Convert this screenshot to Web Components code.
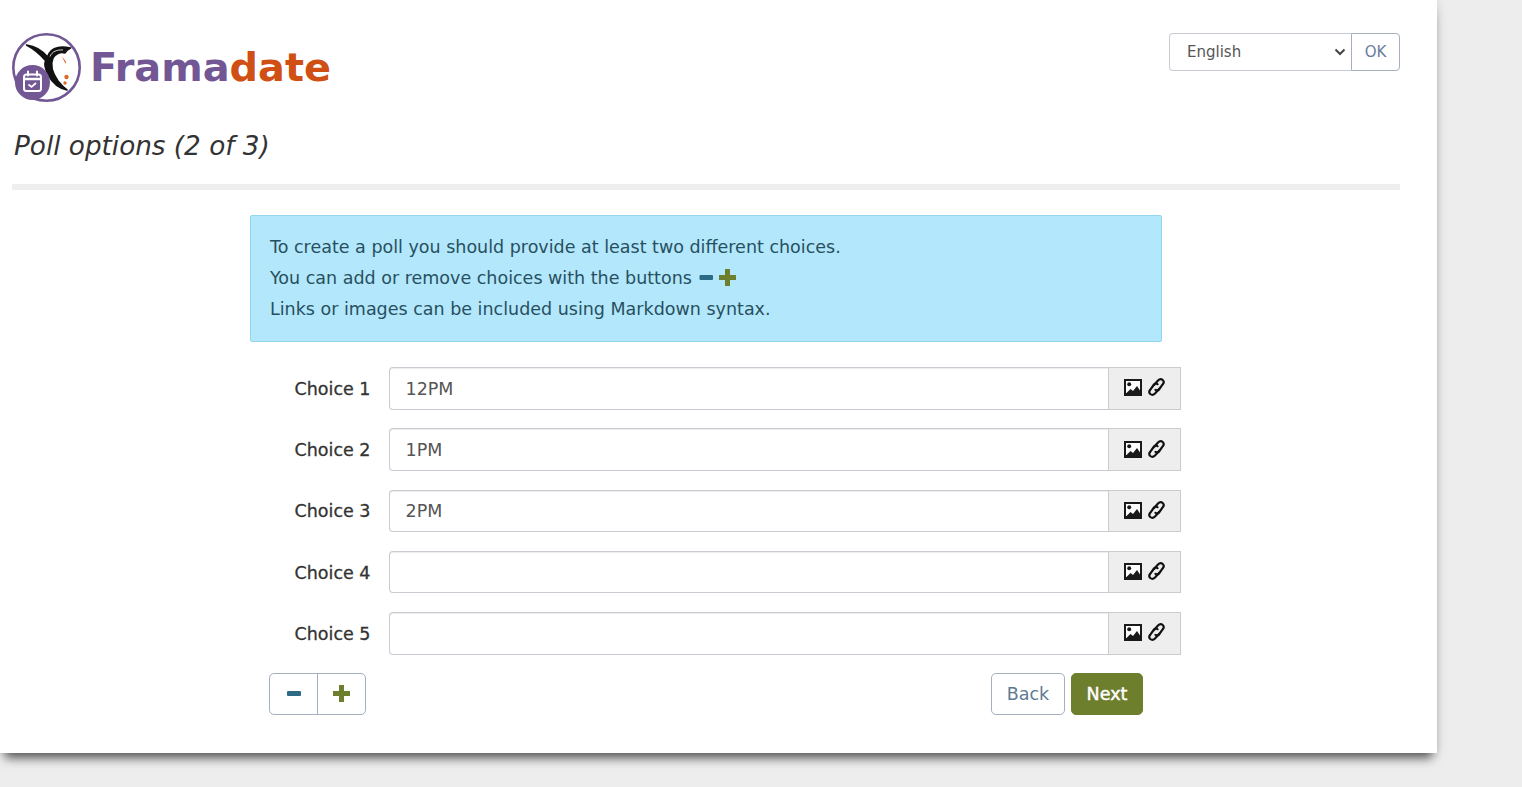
<!DOCTYPE html>
<html><head><meta charset="utf-8"><style>
html,body{margin:0;padding:0;height:787px;overflow:hidden;background:#ededed;font-family:"DejaVu Sans",sans-serif;color:#333}
</style></head><body>
<fd-page>
  <fd-header slot="header"></fd-header>
  <fd-alert>
    <div>To create a poll you should provide at least two different choices.</div>
    <div>You can add or remove choices with the buttons <fd-sign kind="minus"></fd-sign><fd-sign kind="plus"></fd-sign></div>
    <div>Links or images can be included using Markdown syntax.</div>
  </fd-alert>
  <fd-choice label="Choice 1" value="12PM"></fd-choice>
  <fd-choice label="Choice 2" value="1PM"></fd-choice>
  <fd-choice label="Choice 3" value="2PM"></fd-choice>
  <fd-choice label="Choice 4"></fd-choice>
  <fd-choice label="Choice 5"></fd-choice>
  <fd-actions></fd-actions>
</fd-page>
<script>
function def(name, html, init){
  customElements.define(name, class extends HTMLElement{
    constructor(){super();this.attachShadow({mode:'open'}).innerHTML=html;}
    connectedCallback(){ if(init) init.call(this,this.shadowRoot); }
  });
}
def('fd-page',`<style>
:host{display:block;width:1437px;height:753px;box-sizing:border-box;background:#fff;box-shadow:0 10px 10px -5px rgba(0,0,0,.62),0 0 10px rgba(0,0,0,.12);padding:0 37px 0 12px}
.body{display:block}
</style><slot name="header"></slot><div class="body"><slot></slot></div>`);

def('fd-header',`<style>
:host{display:block;height:190px;position:relative}
.top{display:flex;justify-content:space-between;align-items:flex-start;padding-top:33px;height:70px;box-sizing:content-box}
.brand{display:flex;align-items:center;gap:8px;height:70px}
.word{font:bold 39.85px/1 "DejaVu Sans",sans-serif;color:#725794;display:block;white-space:nowrap}
.word b{color:#cf4f14;font-weight:bold}
svg{display:block;flex:none}
.lang{display:flex;height:38px;font-size:15px;line-height:37px;color:#555}
.sel{width:182px;box-sizing:border-box;border:1px solid #c8ccd2;border-right:0;border-radius:4px 0 0 4px;padding-left:17px;display:flex;justify-content:space-between;align-items:center;padding-right:5px}
.ok{width:49px;box-sizing:border-box;border:1px solid #a4afc0;border-radius:0 4px 4px 0;text-align:center;color:#6a7d9c}
h1{margin:0;position:absolute;left:2px;top:129px;font:italic 500 26.25px/34px "DejaVu Sans",sans-serif;color:#333}
.rule{position:absolute;left:0;right:0;top:184px;height:6px;background:#eee}
</style>
<div class="top">
  <div class="brand">
    <svg width="70" height="70" viewBox="0 0 70 70">
      <circle cx="34.5" cy="34.5" r="33.2" fill="#fff" stroke="#725794" stroke-width="2.6"/>
      <path d="M14.5 12C22 13 30 17 35.5 24 37 19 41 15.500 46 14.500 50 13.500 54 14 58.500 15 55 16.500 54 18 53 20 48 18.500 43 21 41 25 38 32 41 41 46 48 48.500 51 51 54 55 57 47 55 40 49 36.500 42.500 33.500 37 32 32 33.500 27.500 28 21 22 16 14.500 12Z" fill="#111" stroke="#111" stroke-width="1.600" stroke-linejoin="round"/>
      <path d="M38 23.500C40 18.500 45 16.500 51 17" fill="none" stroke="#fff" stroke-width=".8"/>
      <path d="M49.500 23l4.500 5.500-.3 2.500z" fill="#e0682a"/>
      <circle cx="54.500" cy="44" r="2.200" fill="#e0682a"/><circle cx="53" cy="50" r="1.700" fill="#e0682a"/>
      <circle cx="20.500" cy="49.500" r="17.500" fill="#725794"/>
      <g fill="none" stroke="#fff">
        <rect x="12" y="41.500" width="17" height="16.500" rx="2.500" stroke-width="2"/>
        <path d="M12 46h17" stroke-width="2.500"/>
        <path d="M16 38.500v4M25 38.500v4" stroke-width="2" stroke-linecap="round"/>
        <path d="M16.500 51.500l3 2.500 4.500-4" stroke-width="1.700"/>
      </g>
    </svg>
    <span class="word">Frama<b>date</b></span>
  </div>
  <div class="lang">
    <div class="sel"><span>English</span><svg width="12" height="8" viewBox="0 0 12 8"><path d="M1.500 1.500L6 6l4.500-4.500" fill="none" stroke="#444" stroke-width="2"/></svg></div>
    <div class="ok">OK</div>
  </div>
</div>
<h1>Poll options (2 of 3)</h1>
<div class="rule"></div>`);

def('fd-alert',`<style>
:host{display:block;width:912px;box-sizing:border-box;margin:25px 0 25px 238px;height:127px;background:#b3e7fb;border:1px solid #91d5ee;border-radius:2px;padding:16px 19px 14px;font-size:17.5px;line-height:31px;color:#27505f}
</style><slot></slot>`);

def('fd-sign',`<style>
:host{display:inline-block;vertical-align:-2px}
svg{display:block}
</style><svg></svg>`,function(r){
  const s=r.querySelector('svg');
  if(this.getAttribute('kind')==='plus'){
    s.setAttribute('width','17');s.setAttribute('height','17');s.setAttribute('viewBox','0 0 17 17');s.style.marginLeft='6px';
    s.innerHTML='<path d="M6 0h5v6h6v5h-6v6H6v-6H0V6h6z" fill="#6d7e2d"/>';
  } else {
    s.setAttribute('width','16');s.setAttribute('height','17');s.setAttribute('viewBox','0 0 16 17');
    s.innerHTML='<rect x="2.500" y="6" width="13.500" height="5" rx="1" fill="#2d6a86"/>';
  }
});

const icons=`<svg width="18" height="17" viewBox="0 0 18 17"><path fill="#1a1a1a" d="M0 0h18v17H0z"/><path fill="#fff" d="M2 2h14v9.500l-3-4.500-4 5-2.500-2-4 4H2z"/><circle cx="5.200" cy="5.200" r="2" fill="#1a1a1a"/></svg><svg width="17" height="18" viewBox="0 0 17 18" style="margin-left:6px;margin-top:-1px"><g fill="none" stroke="#111" stroke-width="2.200" stroke-linecap="round"><path d="M6 7L10 2.500C11.500 1 13.500 1 14.700 2 16 3.200 15.800 5 14.800 6.200L11 11.500C10 12.800 8.500 12.800 7.500 11.800"/><path d="M11 11L7 15.500C5.500 17 3.500 17 2.300 16 1 14.800 1.200 13 2.200 11.800L6 6.500C7 5.200 8.500 5.200 9.500 6.200"/></g></svg>`;

def('fd-choice',`<style>
:host{display:flex;align-items:stretch;height:42.5px;margin:0 0 18.75px 0;padding-left:283px;font-size:17.5px}
label{width:75px;flex:none;margin-right:19px;margin-left:-0.5px;padding-top:.85px;text-align:right;font-size:17.5px;line-height:43.5px;color:#333;white-space:nowrap;-webkit-text-stroke:.3px #333}
.in{width:720px;box-sizing:border-box;border:1px solid #c8ccd2;border-right:0;border-radius:4px 0 0 4px;padding:.6px 16px 0;line-height:41.5px;color:#555;font-size:17.5px;background:#fff;box-shadow:inset 0 1px 1px rgba(0,0,0,.075)}
.add{width:73px;box-sizing:border-box;background:#eee;border:1px solid #ccc;display:flex;align-items:center;padding-left:15.500px;padding-bottom:1px;margin-left:-1px}
svg{display:block;flex:none}
</style><label></label><div class="in"></div><div class="add">${icons}</div>`,function(r){
  r.querySelector('label').textContent=this.getAttribute('label');
  r.querySelector('.in').textContent=this.getAttribute('value')||'';
});

def('fd-actions',`<style>
:host{display:flex;justify-content:space-between;align-items:flex-start;margin-left:257px;width:874px;font-size:17.5px}
.group{display:flex;height:42px;box-sizing:border-box;border:1px solid #a4afc0;border-radius:5px;width:97px}
.group div{flex:1;display:flex;align-items:center;justify-content:center;padding-bottom:2px}
.group div:first-child{border-right:1px solid #a4afc0;flex:0 0 48px;box-sizing:border-box}
.r{display:flex;gap:6px}
.btn{height:42px;box-sizing:border-box;border-radius:5px;line-height:40px;text-align:center}
.back{width:74px;border:1px solid #a4afc0;color:#5d7a93}
.next{width:72px;background:#6d7e2d;border:1px solid #6d7e2d;color:#fff;-webkit-text-stroke:.45px #fff}
svg{display:block}
</style>
<div class="group"><div><svg width="14" height="5"><rect width="14" height="5" rx="1" fill="#2d6a86"/></svg></div><div><svg width="17" height="17" viewBox="0 0 17 17"><path d="M6 0h5v6h6v5h-6v6H6v-6H0V6h6z" fill="#6d7e2d"/></svg></div></div>
<div class="r"><div class="btn back">Back</div><div class="btn next">Next</div></div>`);
</script>
</body></html>
